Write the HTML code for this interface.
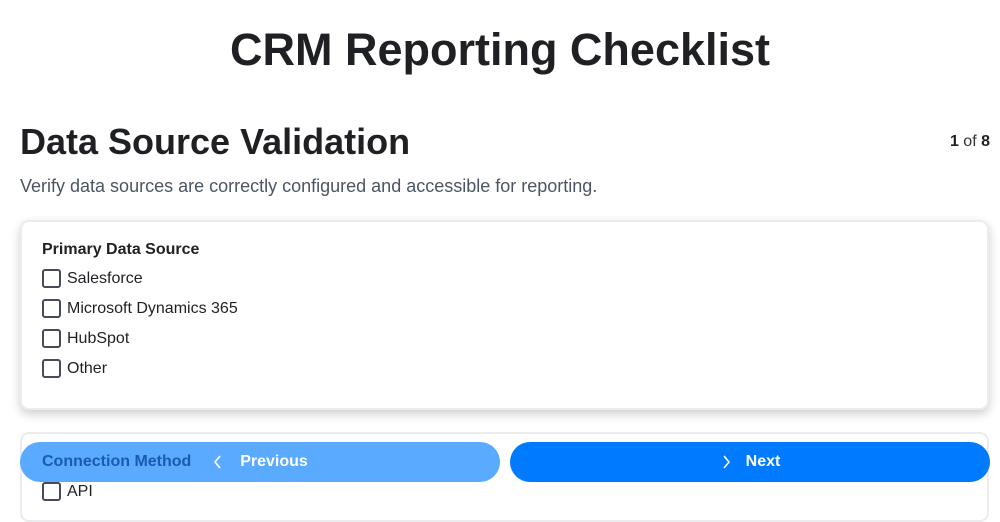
<!DOCTYPE html>
<html><head><style>
*{box-sizing:border-box;margin:0;padding:0}
body{width:1000px;height:500px;overflow:hidden;background:#fff;font-family:"Liberation Sans",sans-serif;color:#1f2023;position:relative}
h1{position:absolute;top:24px;left:0;width:1000px;text-align:center;font-size:45px;font-weight:700;line-height:52px;color:#1f2023}
h2{position:absolute;top:120px;left:20px;font-size:36px;font-weight:700;line-height:44px}
.cnt{position:absolute;top:133px;right:10px;font-size:16px;color:#333}
.cnt b{color:#1f2023}
.sub{position:absolute;top:176px;left:20px;font-size:18px;color:#4b5563;line-height:20px}
.card{position:absolute;left:20px;width:969px;background:#fff;border:2px solid #ececf0;border-radius:9px}
.c1{top:220px;height:190px;box-shadow:0 4px 10px rgba(0,0,0,.2)}
.c2{top:432px;height:90px}
.lbl{position:absolute;left:20px;font-size:16px;font-weight:700}
.opt{position:absolute;left:20px;font-size:16px;display:flex;align-items:center;height:20px}
.box{width:19px;height:19px;border:2px solid #474b5b;border-radius:3px;margin-right:6px;position:relative;top:-1px}
.btn{position:absolute;top:442px;height:40px;border-radius:20px;color:#fff;font-weight:700;font-size:16px;display:flex;align-items:center;justify-content:center}
.prev{left:20px;width:480px;background:#5aabff}
.next{left:510px;width:480px;background:#007bff}
.cm{position:absolute;left:42px;top:453px;font-size:16px;font-weight:700;color:#1a5bb0}
</style></head><body>
<h1>CRM Reporting Checklist</h1>
<h2>Data Source Validation</h2>
<div class="cnt"><b>1</b> of <b>8</b></div>
<div class="sub">Verify data sources are correctly configured and accessible for reporting.</div>
<div class="card c1">
<div class="lbl" style="top:19px">Primary Data Source</div>
<div class="opt" style="top:47px"><div class="box"></div>Salesforce</div>
<div class="opt" style="top:77px"><div class="box"></div>Microsoft Dynamics 365</div>
<div class="opt" style="top:107px"><div class="box"></div>HubSpot</div>
<div class="opt" style="top:137px"><div class="box"></div>Other</div>
</div>
<div class="card c2">
<div class="opt" style="top:48px"><div class="box"></div>API</div>
</div>
<div class="btn prev"><svg width="12" height="16" viewBox="0 0 12 16" style="margin-right:16px"><path d="M8 2L3 8l5 6" fill="none" stroke="#fff" stroke-width="1.6"/></svg>Previous</div>
<div class="cm">Connection Method</div>
<div class="btn next"><svg width="12" height="16" viewBox="0 0 12 16" style="margin-right:14px"><path d="M4 2l5 6-5 6" fill="none" stroke="#fff" stroke-width="1.6"/></svg>Next</div>
</body></html>
